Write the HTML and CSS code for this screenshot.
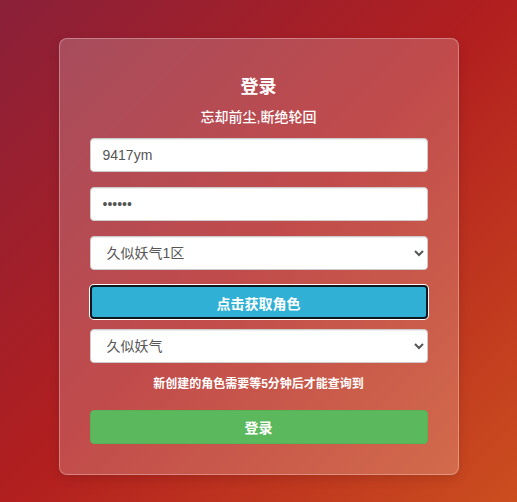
FILE: index.html
```html
<!DOCTYPE html>
<html lang="zh">
<head>
<meta charset="utf-8">
<title>登录</title>
<link rel="stylesheet" href="styles.css">
</head>
<body>
<div class="card">
  <h2 class="title">登录</h2>
  <p class="subtitle">忘却前尘,断绝轮回</p>
  <form class="form">
    <div class="group"><input class="control" type="text" value="9417ym"></div>
    <div class="group"><input class="control" type="password" value="123456"></div>
    <div class="group">
      <select class="control select">
        <option>久似妖气1区</option>
      </select>
    </div>
    <div class="group group-tight"><button type="button" class="btn btn-info">点击获取角色</button></div>
    <div class="group group-none">
      <select class="control select">
        <option>久似妖气</option>
      </select>
    </div>
    <p class="note">新创建的角色需要等5分钟后才能查询到</p>
    <button type="button" class="btn btn-success">登录</button>
  </form>
</div>
</body>
</html>
```
FILE: styles.css
```css
html, body {
  margin: 0;
  padding: 0;
  height: 100%;
}
body {
  background: linear-gradient(135deg, #8a2039 0%, #b21f1f 50%, #cc4e1f 100%);
  font-family: "Liberation Sans", "Noto Sans CJK SC", sans-serif;
  font-size: 14px;
  color: #fff;
  overflow: hidden;
}
.card {
  box-sizing: border-box;
  width: 400px;
  margin: 38px auto 0;
  padding: 35px 30px 30px;
  background: rgba(255, 255, 255, 0.2);
  border: 1px solid rgba(255, 255, 255, 0.3);
  border-radius: 8px;
  box-shadow: 0 4px 12px rgba(0, 0, 0, 0.12);
}
.title {
  margin: 0;
  text-align: center;
  font-size: 18px;
  line-height: 26px;
  font-weight: bold;
}
.subtitle {
  margin: 7px 0 11px;
  text-align: center;
  font-size: 14px;
  line-height: 20px;
  font-weight: 500;
}
.form {
  margin: 0;
}
.group {
  margin-bottom: 15px;
}
.group-tight {
  margin-bottom: 10px;
}
.group-none {
  margin-bottom: 0;
}
.control {
  display: block;
  box-sizing: border-box;
  width: 100%;
  height: 34px;
  padding: 6px 12px;
  font-family: "Liberation Sans", "Noto Sans CJK SC", sans-serif;
  font-size: 14px;
  color: #555;
  background: #fff;
  border: 1px solid #ccc;
  border-radius: 4px;
  box-shadow: inset 0 1px 1px rgba(0, 0, 0, 0.075);
  outline: none;
}
.select {
  padding: 6px 8px 6px 12px;
}
.btn {
  display: block;
  box-sizing: border-box;
  width: 100%;
  height: 34px;
  padding: 6px 12px;
  font-family: "Liberation Sans", "Noto Sans CJK SC", sans-serif;
  font-size: 14px;
  font-weight: bold;
  color: #fff;
  border: 1px solid transparent;
  border-radius: 4px;
  cursor: pointer;
}
.btn-info {
  background: #31b0d5;
  border: 2px solid #10161c;
  box-shadow: 0 0 0 1px #fff;
}
.btn-success {
  background: #5cb85c;
  border-color: #57b257;
}
.note {
  margin: 11px 0 16px;
  text-align: center;
  font-size: 12px;
  line-height: 20px;
  font-weight: bold;
}
```
